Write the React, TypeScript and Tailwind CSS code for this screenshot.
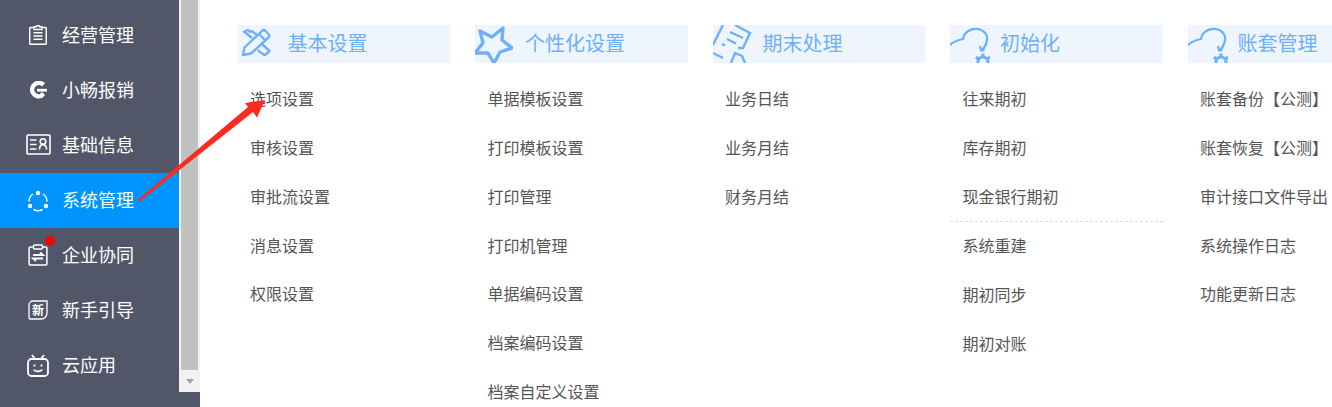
import { ReactNode } from "react";

const font = { fontFamily: '"Noto Sans CJK SC", "Liberation Sans", sans-serif' };

function ClipboardIcon() {
  return (
    <svg width="18" height="20" viewBox="0 0 18 20" fill="none" stroke="white" strokeWidth="1.500">
      <path d="M5 2.500H1.500a.8.8 0 0 0-.8.8V18.500a.8.8 0 0 0 .8.8h15a.8.8 0 0 0 .8-.8V3.300a.8.8 0 0 0-.8-.8H13" />
      <path d="M5 4.500V1.800h2.500a1.500 1.500 0 0 1 3 0H13v2.700z" />
      <path d="M4.500 7.800h9M4.500 11h9M4.500 14.200h9" />
    </svg>
  );
}

function GLogo() {
  return (
    <svg width="20" height="18" viewBox="0 0 20 18" fill="none">
      <path d="M15.500 3.800A6.700 6.700 0 1 0 13 15l2.500-2.500" stroke="white" strokeWidth="4.400" />
      <path d="M9 9.200h10" stroke="white" strokeWidth="2.800" />
    </svg>
  );
}

function CardIcon() {
  return (
    <svg width="25" height="21" viewBox="0 0 25 21" fill="none" stroke="white" strokeWidth="1.600">
      <rect x="1" y="1" width="23" height="19" rx="1" />
      <path d="M4 6h6.500M4 10.500h6.500M4 15h6.500" />
      <circle cx="17" cy="7.500" r="2.800" />
      <path d="M13.500 15.500c0-6.500 7-6.500 7 0" />
    </svg>
  );
}

function OrbitIcon() {
  return (
    <svg width="22" height="22" viewBox="0 0 22 22" fill="none" stroke="white" strokeWidth="1.500">
      <path d="M6 4A9 9 0 0 0 2 11.500" />
      <path d="M16 4a9 9 0 0 1 4 7.500" />
      <path d="M6.500 19.500a9 9 0 0 0 9 0" />
      <circle cx="11" cy="3" r="2.200" fill="white" stroke="none" />
      <circle cx="3" cy="16" r="2.200" fill="white" stroke="none" />
      <circle cx="19" cy="16" r="2.200" fill="white" stroke="none" />
    </svg>
  );
}

function TaskIcon() {
  return (
    <svg width="20" height="22" viewBox="0 0 20 22" fill="none" stroke="white" strokeWidth="1.500">
      <path d="M5.500 3H2.300a1.200 1.200 0 0 0-1.200 1.200V19.800A1.200 1.200 0 0 0 2.300 21h15.400a1.200 1.200 0 0 0 1.200-1.200V4.200A1.200 1.200 0 0 0 17.700 3h-3.200" />
      <rect x="5.500" y="1" width="9" height="4" rx="1" />
      <path d="M5 11h10l-3-2.500" strokeWidth="1.800" />
      <path d="M15 14.500H5l3 2.500" strokeWidth="1.800" />
    </svg>
  );
}

function NewIcon() {
  return (
    <svg width="20" height="20" viewBox="0 0 20 20" fill="none" stroke="white" strokeWidth="1.300">
      <path d="M5 1h14v12a6 6 0 0 1-6 6H2a1 1 0 0 1-1-1V5a4 4 0 0 1 4-4z" />
      <text x="10" y="14.500" fontSize="12" fontWeight="700" fill="white" stroke="none" textAnchor="middle" style={font}>新</text>
    </svg>
  );
}

function TvIcon() {
  return (
    <svg width="22" height="23" viewBox="0 0 22 23" fill="none" stroke="white" strokeWidth="1.800">
      <rect x="1" y="5" width="20" height="17" rx="3.500" />
      <path d="M5 1l3 4M17 1l-3 4" />
      <path d="M7.500 10.500v2M14.500 10.500v2" />
      <path d="M7 15.500c1 2.500 7 2.500 8 0" />
    </svg>
  );
}

function PencilRulerIcon() {
  return (
    <svg width="34" height="31" viewBox="0 0 34 31" fill="none" stroke="#6fb0fb" strokeWidth="2.400" strokeLinejoin="round">
      <path d="M5 30l1.500-7.500L24 6a2.500 2.500 0 0 1 3.500 0l3 3a2.500 2.500 0 0 1 0 3.500L13 28.500z" />
      <path d="M21 9l6.500 6.500" />
      <path d="M14 13L6 6.500 10 5l2 2 2-1 5 4" />
      <path d="M24 19l7.500 7-5 4.500-2-2-2-1-2.500-2.500" />
    </svg>
  );
}

function StarIcon() {
  return (
    <svg width="38" height="38" viewBox="0 0 38 38" fill="none" stroke="#6fb0fb" strokeWidth="3.400" strokeLinejoin="round">
      <path d="M5 6l12 6L28 3l-1 12 10 8-12 4-6 11-6-10H0l8-10z" />
    </svg>
  );
}

function DocIcon() {
  return (
    <svg width="40" height="38" viewBox="0 0 40 38" fill="none" stroke="#6fb0fb" strokeWidth="2.400">
      <path d="M10 0L0 20" />
      <path d="M0 28l10 5" />
      <path d="M22 0l15 8-7 15h-5" />
      <path d="M17 7l13 6M14 14l9 4.500M9 19l3 1.500" />
      <path d="M18 38l4-10 7 3 3 7" />
    </svg>
  );
}

function CloudGearIcon() {
  return (
    <svg width="40" height="38" viewBox="0 0 40 38" fill="none" stroke="#6fb0fb" strokeWidth="2.200">
      <path d="M0 20c3-3 8-5 13-6 1-7 8-11 15-10 6 1 10 6 9 11-.5 4-2 7-5 10" strokeLinecap="round" />
      <path d="M30 21l1 4.500 3.500-.5" />
      <circle cx="33" cy="37" r="5" strokeWidth="3" />
      <path d="M33 28.500v3.500M26 32l3 2.500M40 32l-3 2.500" strokeWidth="3" />
    </svg>
  );
}

const menus: { label: string; icon: ReactNode; iconBox: string; active?: boolean; dot?: boolean }[] = [
  { label: "经营管理", icon: <ClipboardIcon />, iconBox: "pb-[2px]" },
  { label: "小畅报销", icon: <GLogo />, iconBox: "pb-[1px]" },
  { label: "基础信息", icon: <CardIcon />, iconBox: "pb-[2px]" },
  { label: "系统管理", icon: <OrbitIcon />, iconBox: "", active: true },
  { label: "企业协同", icon: <TaskIcon />, dot: true, iconBox: "pb-[1px]" },
  { label: "新手引导", icon: <NewIcon />, iconBox: "pb-[1px]" },
  { label: "云应用", icon: <TvIcon />, iconBox: "" },
];

const columns: { title: string; icon: ReactNode; items: string[]; split?: number }[] = [
  {
    title: "基本设置",
    icon: <PencilRulerIcon />,
    items: ["选项设置", "审核设置", "审批流设置", "消息设置", "权限设置"],
  },
  {
    title: "个性化设置",
    icon: <StarIcon />,
    items: ["单据模板设置", "打印模板设置", "打印管理", "打印机管理", "单据编码设置", "档案编码设置", "档案自定义设置"],
  },
  { title: "期末处理", icon: <DocIcon />, items: ["业务日结", "业务月结", "财务月结"] },
  {
    title: "初始化",
    icon: <CloudGearIcon />,
    items: ["往来期初", "库存期初", "现金银行期初", "系统重建", "期初同步", "期初对账"],
    split: 3,
  },
  {
    title: "账套管理",
    icon: <CloudGearIcon />,
    items: ["账套备份【公测】", "账套恢复【公测】", "审计接口文件导出", "系统操作日志", "功能更新日志"],
  },
];

export default function App() {
  return (
    <div className="relative flex h-[407px] w-[1332px] overflow-hidden bg-white" style={font}>
      {/* left nav */}
      <div className="flex h-full w-[200px] shrink-0 flex-col bg-[#525669]">
        <div className="flex h-[392px] shrink-0">
          <div className="w-[179px] pt-[8px]">
            {menus.map((m) => (
              <div
                key={m.label}
                className={`flex h-[55px] items-center ${m.active ? "bg-[#0094ff]" : ""}`}
              >
                <div className={`relative flex w-[62px] justify-center pl-[14px] ${m.iconBox}`}>
                  {m.icon}
                  {m.dot && <span className="absolute left-[45px] top-[-8px] h-[10px] w-[10px] rounded-full bg-[#ff0000]" />}
                </div>
                <span className="pb-[3px] text-[18px] leading-[24px] text-white">{m.label}</span>
              </div>
            ))}
          </div>
          <div className="flex w-[21px] flex-col bg-[#f1f1f1] pl-[2px] pr-[2px]">
            <div className="h-[370px] bg-[#c1c1c1]" />
            <div className="flex flex-1 items-center justify-center">
              <div className="h-0 w-0 border-x-[4px] border-t-[5px] border-x-transparent border-t-[#a3a3a3]" />
            </div>
          </div>
        </div>
      </div>

      {/* menu panel */}
      <div className="flex min-w-0 flex-1 gap-[25px] overflow-hidden pl-[37.500px] pt-[25px]">
        {columns.map((c) => (
          <div key={c.title} className="w-[212.500px] shrink-0">
            <div className="flex h-[38px] items-center overflow-hidden bg-[#eef5fe]">
              <div className="flex h-[38px] w-[50px] shrink-0 items-start">{c.icon}</div>
              <span className="pb-[3px] text-[20px] leading-[28px] text-[#6fb0fb]">{c.title}</span>
            </div>
            <div className="mt-[11.800px]">
              {c.items.map((item, i) => (
                <div
                  key={item}
                  className={`flex items-center whitespace-nowrap pb-[2px] pl-[12.500px] text-[16px] leading-[22px] text-[#555555] ${
                    c.split === i + 1 ? "h-[49.600px] border-b border-dashed border-[#dddddd]" : "h-[48.800px]"
                  }`}
                >
                  {item}
                </div>
              ))}
            </div>
          </div>
        ))}
      </div>

      {/* red annotation arrow */}
      <svg className="pointer-events-none absolute left-0 top-0" width="1332" height="407">
        <path d="M137.500 200L248 107L245 103L265 100L257 117.500L253 112L139 202z" fill="#fb2b20" />
      </svg>
    </div>
  );
}
